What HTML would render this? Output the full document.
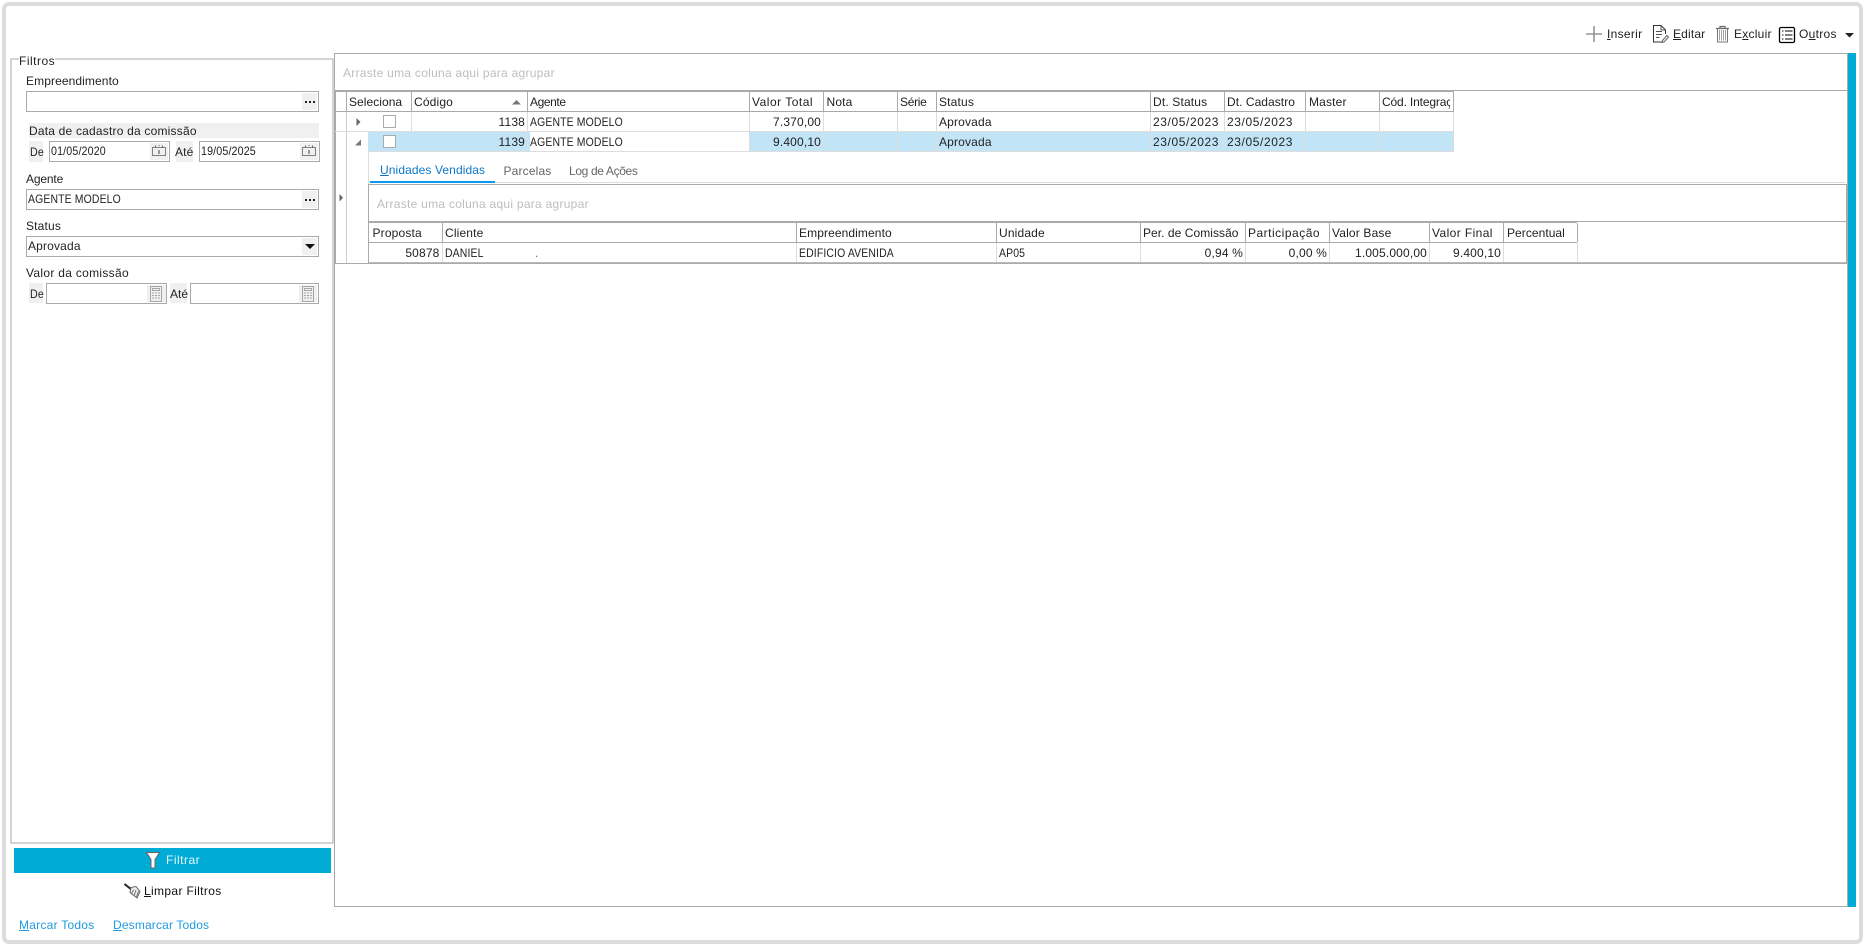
<!DOCTYPE html>
<html lang="pt-BR"><head><meta charset="utf-8"><title>Comissões</title>
<style>
html,body{margin:0;padding:0;background:#fff;width:1867px;height:946px;overflow:hidden}
#frame{position:absolute;left:2px;top:2px;width:1861px;height:942px;box-sizing:border-box;border:4px solid #dcdcdc;border-radius:7px;background:#fff}
svg{position:absolute;left:0;top:0}
.t{position:absolute;white-space:nowrap;font:12px/16px "Liberation Sans",sans-serif;letter-spacing:.16px;color:#222}
.r{text-align:right}
.g{color:#bdbdbd;letter-spacing:.27px}
.c{transform:scaleX(.87);transform-origin:0 50%}
.d{letter-spacing:.6px}
.s{transform:scaleX(.89);transform-origin:0 50%}
u{text-underline-offset:1px}
</style></head><body>
<div id="frame"></div>
<svg width="1867" height="946" viewBox="0 0 1867 946" xmlns="http://www.w3.org/2000/svg">
<g shape-rendering="crispEdges">
<!-- left panel -->
<rect x="11" y="59" width="322" height="784" fill="none" stroke="#aaa"/>
<rect x="19" y="56" width="36" height="8" fill="#fff"/>
<rect x="29" y="123" width="290" height="15" fill="#f0f0f0"/>
<rect x="29" y="141" width="14" height="21" fill="#f0f0f0"/>
<rect x="176" y="141" width="17" height="21" fill="#f0f0f0"/>
<rect x="29" y="283" width="14" height="20" fill="#f0f0f0"/>
<rect x="170" y="283" width="17" height="20" fill="#f0f0f0"/>
<g fill="#fff" stroke="#aaa">
<rect x="26.5" y="91.5" width="292" height="20"/>
<rect x="49.5" y="141.5" width="120" height="20"/>
<rect x="199.5" y="141.5" width="120" height="20"/>
<rect x="26.5" y="189.5" width="292" height="20"/>
<rect x="26.5" y="236.5" width="292" height="20"/>
<rect x="46.5" y="283.5" width="120" height="20"/>
<rect x="190.5" y="283.5" width="128" height="20"/>
</g>
<g fill="#f0f0f0">
<rect x="302" y="93" width="15" height="17"/>
<rect x="150" y="143" width="18" height="17"/>
<rect x="300" y="143" width="18" height="17"/>
<rect x="302" y="191" width="15" height="17"/>
<rect x="302" y="238" width="15" height="17"/>
<rect x="147" y="285" width="19" height="17"/>
<rect x="299" y="285" width="18" height="17"/>
</g>
<g fill="#222">
<rect x="305" y="101" width="2" height="2"/><rect x="309" y="101" width="2" height="2"/><rect x="313" y="101" width="2" height="2"/>
<rect x="305" y="199" width="2" height="2"/><rect x="309" y="199" width="2" height="2"/><rect x="313" y="199" width="2" height="2"/>
</g>
<!-- filter button -->
<rect x="14" y="848" width="317" height="25" fill="#00acd6"/>
<!-- right panel -->
<rect x="334" y="53" width="1514" height="1" fill="#aaa"/>
<rect x="334" y="53" width="1" height="854" fill="#aaa"/>
<rect x="334" y="906" width="1514" height="1" fill="#aaa"/>
<rect x="1847" y="53" width="1" height="854" fill="#aaa"/>
<rect x="1848" y="53" width="8" height="854" fill="#00acd6"/>
<rect x="335" y="90" width="1512" height="1" fill="#aaa"/>
<rect x="335" y="90" width="1119" height="2" fill="#aaa"/>
<!-- row backgrounds -->
<rect x="368" y="131" width="162" height="20" fill="#c2e4f7"/>
<rect x="749" y="131" width="705" height="20" fill="#c2e4f7"/>
<!-- main grid lines -->
<rect x="335" y="92" width="1" height="172" fill="#aaa"/>
<rect x="346" y="92" width="1" height="171" fill="#ccc"/>
<rect x="346" y="92" width="1" height="19" fill="#aaa"/>
<rect x="335" y="111" width="1119" height="1" fill="#aaa"/>
<rect x="335" y="131" width="1119" height="1" fill="#ddd"/>
<rect x="368" y="151" width="1086" height="1" fill="#ddd"/>
<g fill="#aaa">
<rect x="411" y="92" width="1" height="19"/><rect x="527" y="92" width="1" height="19"/><rect x="749" y="92" width="1" height="19"/><rect x="823" y="92" width="1" height="19"/><rect x="897" y="92" width="1" height="19"/><rect x="936" y="92" width="1" height="19"/><rect x="1150" y="92" width="1" height="19"/><rect x="1224" y="92" width="1" height="19"/><rect x="1305" y="92" width="1" height="19"/><rect x="1379" y="92" width="1" height="19"/><rect x="1453" y="92" width="1" height="19"/>
</g>
<g fill="#ddd">
<rect x="411" y="112" width="1" height="19"/><rect x="527" y="112" width="1" height="39"/><rect x="749" y="112" width="1" height="39"/><rect x="823" y="112" width="1" height="39"/><rect x="897" y="112" width="1" height="39"/><rect x="936" y="112" width="1" height="39"/><rect x="1150" y="112" width="1" height="39"/><rect x="1224" y="112" width="1" height="39"/><rect x="1305" y="112" width="1" height="39"/><rect x="1379" y="112" width="1" height="39"/><rect x="1453" y="112" width="1" height="39"/>
</g>
<!-- checkboxes -->
<rect x="383.5" y="115.5" width="12" height="12" fill="#fff" stroke="#aaa"/>
<rect x="383.5" y="135.5" width="12" height="12" fill="#fff" stroke="#aaa"/>
<!-- detail panel -->
<rect x="368" y="151" width="1" height="112" fill="#ddd"/>
<rect x="368" y="182" width="1478" height="1" fill="#ddd"/>
<rect x="370" y="181" width="125" height="2" fill="#0a9bf0"/>
<rect x="368" y="184" width="1478" height="1" fill="#aaa"/>
<rect x="368" y="184" width="1" height="79" fill="#aaa"/>
<rect x="1846" y="184" width="1" height="79" fill="#aaa"/>
<rect x="369" y="221" width="1477" height="1" fill="#aaa"/>
<rect x="369" y="221" width="1208" height="2" fill="#aaa"/>
<rect x="369" y="242" width="1208" height="1" fill="#aaa"/>
<rect x="369" y="262" width="1477" height="2" fill="#bbb"/>
<rect x="335" y="263" width="1512" height="1" fill="#aaa"/>
<g fill="#aaa">
<rect x="442" y="223" width="1" height="19"/><rect x="796" y="223" width="1" height="19"/><rect x="996" y="223" width="1" height="19"/><rect x="1140" y="223" width="1" height="19"/><rect x="1245" y="223" width="1" height="19"/><rect x="1329" y="223" width="1" height="19"/><rect x="1429" y="223" width="1" height="19"/><rect x="1503" y="223" width="1" height="19"/><rect x="1577" y="223" width="1" height="19"/>
</g>
<g fill="#ddd">
<rect x="442" y="243" width="1" height="19"/><rect x="796" y="243" width="1" height="19"/><rect x="996" y="243" width="1" height="19"/><rect x="1140" y="243" width="1" height="19"/><rect x="1245" y="243" width="1" height="19"/><rect x="1329" y="243" width="1" height="19"/><rect x="1429" y="243" width="1" height="19"/><rect x="1503" y="243" width="1" height="19"/><rect x="1577" y="243" width="1" height="19"/>
</g>
</g>
<!-- arrows -->
<path d="M305 244h10l-5 5z" fill="#111"/>
<path d="M512 104.500h9l-4.500-4.500z" fill="#777"/>
<path d="M356.500 118v8l4-4z" fill="#666"/>
<path d="M361 139.500v6h-6z" fill="#777"/>
<path d="M339.500 194v7.500l3.500-3.700z" fill="#666"/>
<path d="M1845 33h9l-4.500 4.500z" fill="#222"/>
<!-- calendar icons -->
<g fill="none" stroke="#808080">
<path d="M152.500 147.500h13v8h-13z"/><path d="M155.500 145.500v2M158.500 145.500h1M162.500 145.500v2" stroke="#666"/><path d="M159 150v4" stroke="#444"/>
</g>
<g fill="none" stroke="#808080">
<path d="M302.500 147.500h13v8h-13z"/><path d="M305.500 145.500v2M308.500 145.500h1M312.500 145.500v2" stroke="#666"/><path d="M309 150v4" stroke="#444"/>
</g>
<!-- calculators -->
<g fill="none" stroke="#a6a6a6">
<rect x="150.500" y="286.500" width="11" height="15"/><rect x="152.500" y="288.500" width="7" height="2"/>
<path d="M152 293h8M152 295.500h8M152 298h8" stroke-dasharray="2 1"/>
<rect x="302.500" y="286.500" width="11" height="15"/><rect x="304.500" y="288.500" width="7" height="2"/>
<path d="M304 293h8M304 295.500h8M304 298h8" stroke-dasharray="2 1"/>
</g>
<!-- toolbar icons -->
<path d="M1586 34h16M1594 26v16" stroke="#808080" stroke-width="1.300" fill="none"/>
<path d="M1665.500 34v-4l-4.500-4.500h-7.500v16.500h9" fill="none" stroke="#333"/>
<path d="M1661 25.500v4.500h4.500M1656 31.500h6M1656 34.500h6M1656 37.500h3.500" fill="none" stroke="#555"/>
<path d="M1662.500 40.500l4.500-5 1.500 1.500-4.500 5-2 .5z" fill="none" stroke="#666"/>
<path d="M1716 28.500h13M1720 28v-1.500h5v1.500" fill="none" stroke="#666" stroke-width="1.200"/>
<path d="M1717.500 29v13h10v-13" fill="none" stroke="#777"/>
<path d="M1719.500 30v10.500M1721.500 30v10.500M1723.500 30v10.500M1725.500 30v10.500" stroke="#999" stroke-width=".9"/>
<rect x="1779.500" y="27.500" width="15" height="15" rx="1.500" fill="none" stroke="#000" stroke-width="1.300"/>
<path d="M1785 31h7.500M1785 35h7.500M1785 39h7.500" stroke="#000" fill="none"/>
<path d="M1782 31h1.500M1782 35h1.500M1782 39h1.500" stroke="#111" fill="none"/>
<!-- funnel -->
<path d="M146.500 852.500h13l-4.500 7v8.500h-4v-8.500z" fill="#fff" stroke="#666"/>
<!-- broom -->
<path d="M124.500 884l7 5.500" stroke="#222" stroke-width="2" fill="none"/>
<path d="M131 887.500l5-1 4 5-3 6.500-7-5.500z" fill="#eee" stroke="#666"/>
<path d="M133.500 889.500l-2 4.500M136 890l-2 6M138.500 891l-2 6" stroke="#777" fill="none"/>
</svg>

<div class="t" style="left:19px;top:53px;letter-spacing:.5px">Filtros</div>
<div class="t" style="left:26px;top:73px;letter-spacing:.1px">Empreendimento</div>
<div class="t" style="left:29px;top:123px;letter-spacing:.2px">Data de cadastro da comissão</div>
<div class="t s" style="left:30px;top:144px">De</div>
<div class="t s" style="left:51px;top:143px">01/05/2020</div>
<div class="t" style="left:175px;top:144px">Até</div>
<div class="t s" style="left:201px;top:143px">19/05/2025</div>
<div class="t" style="left:26px;top:171px;letter-spacing:-.15px">Agente</div>
<div class="t c" style="left:28px;top:191px">AGENTE MODELO</div>
<div class="t" style="left:26px;top:218px">Status</div>
<div class="t" style="left:28px;top:238px">Aprovada</div>
<div class="t" style="left:26px;top:265px;letter-spacing:.3px">Valor da comissão</div>
<div class="t s" style="left:30px;top:286px">De</div>
<div class="t" style="left:170px;top:286px;letter-spacing:0">Até</div>

<div class="t" style="left:166px;top:852px;color:#e8f8fc;letter-spacing:.5px">Filtrar</div>
<div class="t" style="left:144px;top:883px;color:#111;letter-spacing:.35px"><u>L</u>impar Filtros</div>
<div class="t" style="left:19px;top:917px;color:#1f9be0;letter-spacing:.25px"><u>M</u>arcar Todos</div>
<div class="t" style="left:113px;top:917px;color:#1f9be0"><u>D</u>esmarcar Todos</div>

<div class="t" style="left:1607px;top:26px;letter-spacing:.3px"><u>I</u>nserir</div>
<div class="t" style="left:1673px;top:26px"><u>E</u>ditar</div>
<div class="t" style="left:1734px;top:26px;letter-spacing:.25px">E<u>x</u>cluir</div>
<div class="t" style="left:1799px;top:26px;letter-spacing:.3px">O<u>u</u>tros</div>

<div class="t g" style="left:343px;top:65px">Arraste uma coluna aqui para agrupar</div>

<div class="t" style="left:349px;top:94px;letter-spacing:.05px">Seleciona</div>
<div class="t" style="left:414px;top:94px">Código</div>
<div class="t" style="left:530px;top:94px;letter-spacing:-.4px">Agente</div>
<div class="t" style="left:752px;top:94px;letter-spacing:.5px">Valor Total</div>
<div class="t" style="left:826.500px;top:94px">Nota</div>
<div class="t" style="left:900px;top:94px;letter-spacing:-.3px">Série</div>
<div class="t" style="left:939px;top:94px">Status</div>
<div class="t" style="left:1153px;top:94px">Dt. Status</div>
<div class="t" style="left:1227px;top:94px;letter-spacing:.05px">Dt. Cadastro</div>
<div class="t" style="left:1309px;top:94px">Master</div>
<div class="t" style="left:1382px;top:94px;width:68px;overflow:hidden;letter-spacing:-.15px">Cód. Integração</div>

<div class="t r" style="left:470px;width:55px;top:114px">1138</div>
<div class="t c" style="left:530px;top:114px">AGENTE MODELO</div>
<div class="t r" style="left:760px;width:61px;top:114px">7.370,00</div>
<div class="t" style="left:939px;top:114px">Aprovada</div>
<div class="t d" style="left:1153px;top:114px">23/05/2023</div>
<div class="t d" style="left:1227px;top:114px">23/05/2023</div>

<div class="t r" style="left:470px;width:55px;top:134px">1139</div>
<div class="t c" style="left:530px;top:134px">AGENTE MODELO</div>
<div class="t r" style="left:760px;width:61px;top:134px">9.400,10</div>
<div class="t" style="left:939px;top:134px">Aprovada</div>
<div class="t d" style="left:1153px;top:134px">23/05/2023</div>
<div class="t d" style="left:1227px;top:134px">23/05/2023</div>

<div class="t" style="left:380px;top:162px;color:#0a78c8;letter-spacing:.1px"><u>U</u>nidades Vendidas</div>
<div class="t" style="left:503.500px;top:163px;color:#666">Parcelas</div>
<div class="t" style="left:569px;top:163px;color:#666;letter-spacing:-.35px">Log de Ações</div>

<div class="t g" style="left:377px;top:196px">Arraste uma coluna aqui para agrupar</div>

<div class="t" style="left:372.500px;top:225px">Proposta</div>
<div class="t" style="left:445px;top:225px">Cliente</div>
<div class="t" style="left:799px;top:225px;letter-spacing:.1px">Empreendimento</div>
<div class="t" style="left:999px;top:225px">Unidade</div>
<div class="t" style="left:1143px;top:225px;letter-spacing:.05px">Per. de Comissão</div>
<div class="t" style="left:1248px;top:225px;letter-spacing:.5px">Participação</div>
<div class="t" style="left:1332px;top:225px">Valor Base</div>
<div class="t" style="left:1432px;top:225px;letter-spacing:.4px">Valor Final</div>
<div class="t" style="left:1507px;top:225px;letter-spacing:.05px">Percentual</div>

<div class="t r" style="left:380px;width:59.500px;top:245px">50878</div>
<div class="t c" style="left:445px;top:245px">DANIEL</div>
<div class="t" style="left:535px;top:245px;color:#1a8fb0">.</div>
<div class="t c" style="left:799px;top:245px">EDIFICIO AVENIDA</div>
<div class="t c" style="left:999px;top:245px">AP05</div>
<div class="t r" style="left:1180px;width:63px;top:245px">0,94 %</div>
<div class="t r" style="left:1264px;width:63px;top:245px">0,00 %</div>
<div class="t r" style="left:1340px;width:87px;top:245px">1.005.000,00</div>
<div class="t r" style="left:1440px;width:61px;top:245px">9.400,10</div>
</body></html>
